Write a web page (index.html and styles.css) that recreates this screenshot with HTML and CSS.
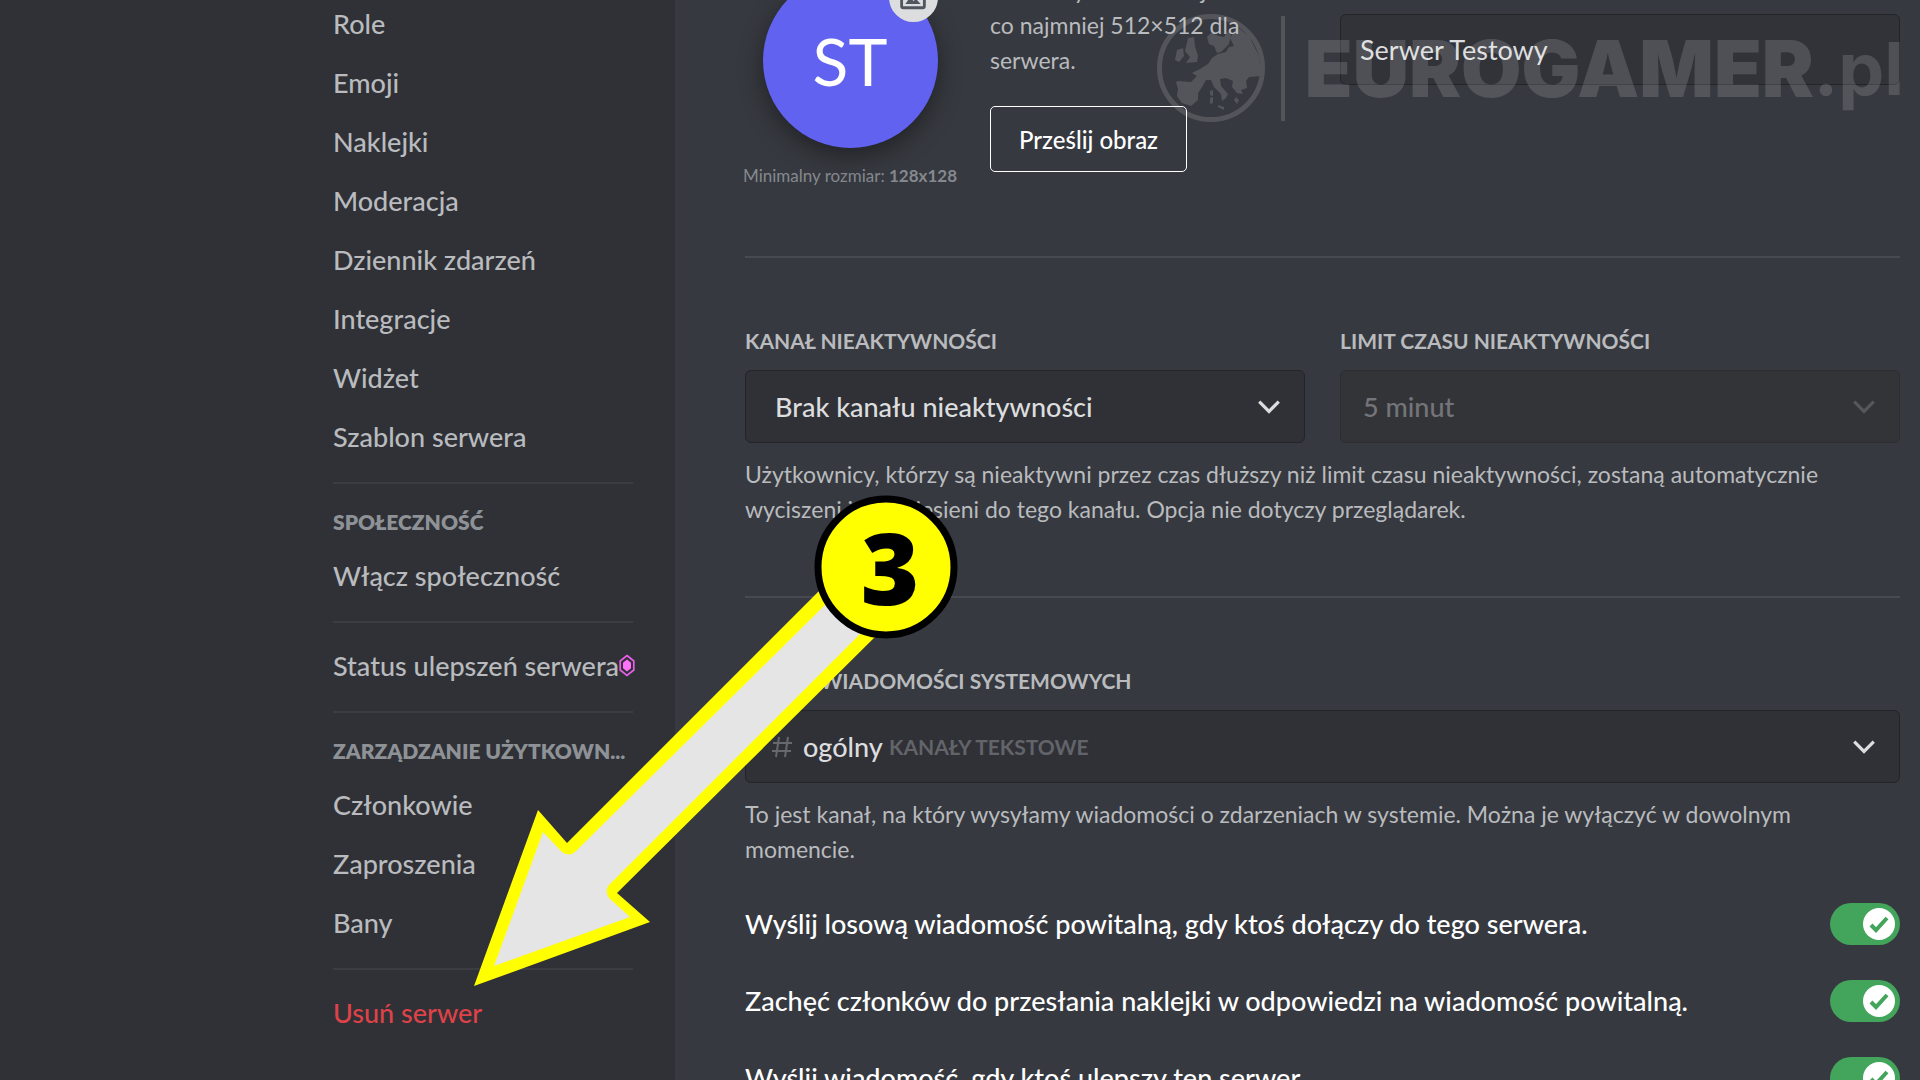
FILE: index.html
```html
<!DOCTYPE html>
<html lang="pl">
<head>
<meta charset="utf-8">
<title>Ustawienia serwera</title>
<link rel="stylesheet" href="styles.css">
</head>
<body>
<div class="shell">
  <aside class="sidebar">
    <nav class="nav">
      <a class="nav-item" href="#role">Role</a>
      <a class="nav-item" href="#emoji">Emoji</a>
      <a class="nav-item" href="#naklejki">Naklejki</a>
      <a class="nav-item" href="#moderacja">Moderacja</a>
      <a class="nav-item" href="#dziennik">Dziennik zdarzeń</a>
      <a class="nav-item" href="#integracje">Integracje</a>
      <a class="nav-item" href="#widzet">Widżet</a>
      <a class="nav-item" href="#szablon">Szablon serwera</a>
      <hr class="nav-line">
      <h2 class="nav-title">Społeczność</h2>
      <a class="nav-item" href="#spolecznosc">Włącz społeczność</a>
      <hr class="nav-line">
      <a class="nav-item" href="#ulepszenia">Status ulepszeń serwera
        <svg class="gem" viewBox="0 0 16 23" aria-hidden="true"><path d="M8 1.500 14.800 7v9L8 21.500 1.200 16V7z" fill="none" stroke="#e65fe6" stroke-width="1.700"/><path d="M8 5.500 12 8.800v5.400l-4 3.300-4-3.300V8.800z" fill="#ff73fa"/></svg>
      </a>
      <hr class="nav-line">
      <h2 class="nav-title">Zarządzanie użytkown...</h2>
      <a class="nav-item" href="#czlonkowie">Członkowie</a>
      <a class="nav-item" href="#zaproszenia">Zaproszenia</a>
      <a class="nav-item" href="#bany">Bany</a>
      <hr class="nav-line">
      <a class="nav-item nav-danger" href="#usun">Usuń serwer</a>
    </nav>
  </aside>

  <main class="content">
    <section class="section columns">
      <div class="icon-field">
        <div class="avatar-side">
          <div class="avatar">ST
            <span class="avatar-badge">
              <svg viewBox="0 0 24 24" width="26" height="26" aria-hidden="true"><rect x="1.5" y="2" width="21" height="19" rx="1.5" fill="none" stroke="#4f5660" stroke-width="2.6"/><path d="M5 17.5 9.5 11l3 4 2-2.500L19 17.500z" fill="#4f5660"/></svg>
            </span>
          </div>
          <p class="hint">Minimalny rozmiar: <strong>128x128</strong></p>
        </div>
        <div class="icon-text">
          <p class="copy">Zalecamy obraz wersji<br>co najmniej 512×512 dla<br>serwera.</p>
          <button class="upload" type="button">Prześlij obraz</button>
        </div>
      </div>
      <div class="field">
        <label class="label" for="name">Nazwa serwera</label>
        <input class="box text-input" id="name" type="text" value="Serwer Testowy">
      </div>
    </section>

    <section class="section">
      <div class="columns">
        <div class="field">
          <label class="label" for="afk">Kanał nieaktywności</label>
          <div class="box">
            <select class="select" id="afk"><option>Brak kanału nieaktywności</option></select>
            <svg class="chevron" viewBox="0 0 24 16" aria-hidden="true"><path d="m3 3 9 9 9-9"/></svg>
          </div>
        </div>
        <div class="field">
          <label class="label" for="limit">Limit czasu nieaktywności</label>
          <div class="box box-disabled">
            <select class="select" id="limit" disabled><option>5 minut</option></select>
            <svg class="chevron" viewBox="0 0 24 16" aria-hidden="true"><path d="m3 3 9 9 9-9"/></svg>
          </div>
        </div>
      </div>
      <p class="copy help">Użytkownicy, którzy są nieaktywni przez czas dłuższy niż limit czasu nieaktywności, zostaną automatycznie<br>wyciszeni i przeniesieni do tego kanału. Opcja nie dotyczy przeglądarek.</p>
    </section>

    <section class="section section-last">
      <div class="field">
        <label class="label" for="system">Kanał wiadomości systemowych</label>
        <div class="box box-channel">
          <svg class="hash" viewBox="0 0 22 22" aria-hidden="true"><path d="M8 1 5 21M17 1l-3 20M2 7h19M1 15h19"/></svg>
          <select class="select" id="system"><option>ogólny</option></select>
          <span class="category">Kanały tekstowe</span>
          <svg class="chevron" viewBox="0 0 24 16" aria-hidden="true"><path d="m3 3 9 9 9-9"/></svg>
        </div>
      </div>
      <p class="copy help">To jest kanał, na który wysyłamy wiadomości o zdarzeniach w systemie. Można je wyłączyć w dowolnym<br>momencie.</p>
      <div class="toggles">
        <label class="toggle-row">Wyślij losową wiadomość powitalną, gdy ktoś dołączy do tego serwera.
          <span class="toggle"><input type="checkbox" checked><svg viewBox="0 0 70 42" aria-hidden="true"><circle cx="49" cy="21" r="16"/><path d="m41 22 5 5 11-12"/></svg></span></label>
        <label class="toggle-row">Zachęć członków do przesłania naklejki w odpowiedzi na wiadomość powitalną.
          <span class="toggle"><input type="checkbox" checked><svg viewBox="0 0 70 42" aria-hidden="true"><circle cx="49" cy="21" r="16"/><path d="m41 22 5 5 11-12"/></svg></span></label>
        <label class="toggle-row">Wyślij wiadomość, gdy ktoś ulepszy ten serwer.
          <span class="toggle"><input type="checkbox" checked><svg viewBox="0 0 70 42" aria-hidden="true"><circle cx="49" cy="21" r="16"/><path d="m41 22 5 5 11-12"/></svg></span></label>
      </div>
    </section>
  </main>

  <div class="watermark">
    <svg class="globe" viewBox="0 0 108 108" aria-hidden="true">
      <circle cx="54" cy="54" r="51.500" fill="none" stroke="#fff" stroke-width="5"/>
      <path d="M80 13 92 22 102 42 104 62 92 63 89 67 90 74 84 76 86 80 80 79 75 73 76 67 69 64 63 65 64 72 71 80 69 84 65 87 64 80 57 73 54 66 49 66 45 73 41 79 41 86 34 92 25 89 20 82 21 75 19 68 21 67 34 68 40 62 35 59 43 55 51 50 55 44 61 40 69 38 72 33 77 32 73 24z" fill="#fff"/>
      <path d="m50 23 4-4 8 3 5 1 4-6 3 3-2 10-8 8-4 1-3-7-5-2zM31 24l6-1 1 9 3 10-1 6-11 1 4-6-5-6zM20 36l6-2 1 8-5 6-4-2zM53 77l3-1v6l-3-1zM53 84l3-1v6l-3 1zM61 91l6 2v3l-6-3zM79 83l3 3-2 4-3-4z" fill="#fff"/>
    </svg>
    <span class="watermark-bar"></span>
    <span class="watermark-name">EUROGAMER</span><span class="watermark-tld">.pl</span>
  </div>

  <svg class="pointer" viewBox="460 480 520 520" role="img" aria-label="3">
    <path d="M474 986 538 810 567 843 820 590 878 634 617 893 650 922z" fill="#ff0"/>
    <path d="M494 966 543 832 562 852Q569 857 575 852L830 600 868 626 608 886Q605 892 609 898L630 917z" fill="#e5e5e5"/>
    <circle cx="886" cy="567" r="68" fill="#ff0" stroke="#000" stroke-width="7"/>
    <text class="pointer-number" x="890" y="605" text-anchor="middle">3</text>
  </svg>
</div>
</body>
</html>
```
FILE: styles.css
```css
* { box-sizing: border-box; }

body {
  margin: 0;
  background: #36393f;
  color: #b9bbbe;
  font-family: Lato, "Noto Sans", sans-serif;
  font-size: 23px;
}

h2, p { margin: 0; }

.shell {
  position: relative;
  display: flex;
  height: 100vh;
  overflow: hidden;
}

/* Sidebar */
.sidebar {
  display: flex;
  flex: none;
  justify-content: flex-end;
  width: 675px;
  padding-right: 42px;
  background: #2f3136;
}

.nav { width: 300px; margin-top: -6px; }

.nav-item {
  display: flex;
  align-items: center;
  justify-content: space-between;
  height: 59px;
  color: #b9bbbe;
  font-size: 27px;
  font-weight: 500;
  text-decoration: none;
  white-space: nowrap;
}

.nav-danger { color: #dd4248; }

.nav-line {
  height: 2px;
  margin: 16px 0 13px;
  border: 0;
  background: #3b3d43;
}

.nav-title {
  color: #8e9297;
  font-size: 21px;
  font-weight: 800;
  line-height: 49px;
  text-transform: uppercase;
  white-space: nowrap;
}

.gem { flex: none; width: 16px; height: 23px; }

/* Settings */
.content {
  flex: 1;
  min-width: 0;
  margin-top: -27px;
  padding: 0 20px 0 70px;
}

.section {
  margin-bottom: 71px;
  padding-bottom: 69px;
  border-bottom: 2px solid #474a50;
}

.section-last { border-bottom: 0; }

.columns {
  display: grid;
  grid-template-columns: 1fr 1fr;
  column-gap: 35px;
}

.icon-field { display: flex; gap: 35px; }

.avatar-side {
  display: flex;
  flex: none;
  flex-direction: column;
  align-items: center;
  width: 210px;
}

.avatar {
  position: relative;
  display: flex;
  align-items: center;
  justify-content: center;
  width: 175px;
  height: 175px;
  border-radius: 50%;
  background: #6262f1;
  box-shadow: 0 8px 24px rgba(0, 0, 0, .4);
  color: #fff;
  font-size: 66px;
}

.avatar-badge {
  position: absolute;
  top: 0;
  right: 0;
  display: flex;
  align-items: center;
  justify-content: center;
  width: 49px;
  height: 49px;
  border-radius: 50%;
  background: #dcddde;
}

.hint {
  margin-top: 17px;
  color: #85898f;
  font-size: 17px;
  line-height: 22px;
  white-space: nowrap;
}

.copy { line-height: 35px; }

.help { margin-top: 14px; }

.upload {
  height: 66px;
  margin-top: 28px;
  padding: 0 28px;
  border: 1px solid #fff;
  border-radius: 5px;
  background: transparent;
  color: #fff;
  font-family: inherit;
  font-size: 24px;
  font-weight: 500;
}

.label {
  display: block;
  margin-bottom: 17px;
  font-size: 21px;
  font-weight: 700;
  line-height: 24px;
  text-transform: uppercase;
}

.box {
  display: flex;
  align-items: center;
  width: 100%;
  height: 73px;
  padding: 0 22px 0 29px;
  border: 1px solid #222428;
  border-radius: 6px;
  background: #303136;
  color: #dcddde;
}

.text-input {
  height: 71px;
  padding: 0 19px;
  background: #313339;
  font-family: inherit;
  font-size: 27px;
}

.select {
  padding: 0;
  border: 0;
  appearance: none;
  background: transparent;
  color: inherit;
  font-family: inherit;
  font-size: 27px;
  font-weight: 500;
  opacity: 1;
}

.box-disabled {
  padding-left: 22px;
  border-color: #2b2d31;
  background: #333438;
  color: #73757a;
}

.chevron {
  flex: none;
  width: 26px;
  height: 18px;
  margin-left: auto;
  fill: none;
  stroke: #dcddde;
  stroke-width: 3;
}

.box-disabled .chevron { stroke: #55575c; }

.box-channel { padding-left: 25px; }

.hash {
  width: 22px;
  height: 24px;
  margin-right: 10px;
  fill: none;
  stroke: #66686d;
  stroke-width: 2;
}

.category {
  margin-left: 6px;
  color: #62646a;
  font-size: 21px;
  font-weight: 700;
  text-transform: uppercase;
}

.toggles {
  display: flex;
  flex-direction: column;
  gap: 35px;
  margin-top: 36px;
}

.toggle-row {
  display: flex;
  align-items: center;
  justify-content: space-between;
  color: #fff;
  font-size: 27px;
  font-weight: 500;
  line-height: 42px;
}

.toggle { display: grid; flex: none; }

.toggle input,
.toggle svg {
  grid-area: 1 / 1;
  width: 70px;
  height: 42px;
  margin: 0;
}

.toggle input {
  border-radius: 21px;
  appearance: none;
  background: #43a45c;
}

.toggle svg { pointer-events: none; }
.toggle circle { fill: #fff; }
.toggle path { fill: none; stroke: #43a45c; stroke-width: 4; }

/* Press watermark over the page */
.watermark {
  position: absolute;
  top: 14px;
  right: 16px;
  display: flex;
  align-items: center;
  height: 108px;
  color: #fff;
  opacity: .14;
  font-family: Inter, sans-serif;
  pointer-events: none;
}

.globe { width: 108px; height: 108px; }

.watermark-bar {
  width: 4px;
  height: 105px;
  margin: 0 20px 0 16px;
  background: #fff;
}

.watermark-name { font-size: 78px; font-weight: 900; }
.watermark-tld { font-size: 73px; font-weight: 700; }

/* Step marker */
.pointer {
  position: absolute;
  top: 480px;
  left: 460px;
  width: 520px;
  height: 520px;
  pointer-events: none;
}

.pointer-number {
  font-family: "Noto Sans", "Open Sans", sans-serif;
  font-size: 100px;
  font-weight: 900;
}
```
